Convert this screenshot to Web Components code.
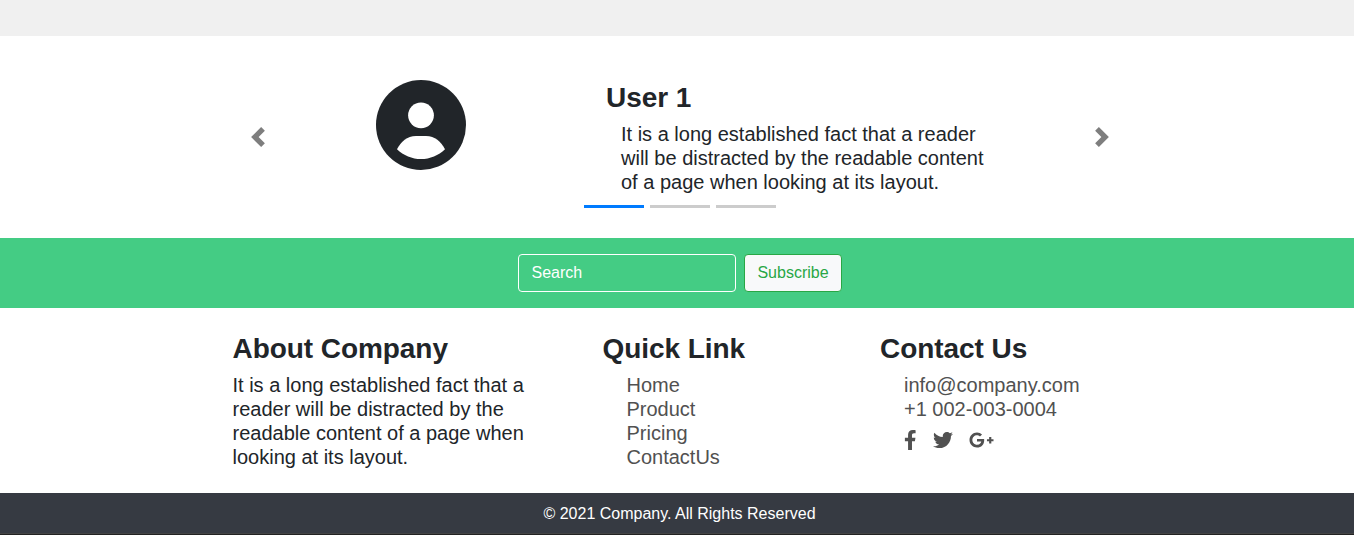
<!DOCTYPE html>
<html lang="en">
<head>
<meta charset="utf-8">
<title>Company</title>
<style>
body{margin:0;background:#fff;color:#212529;font:16px/1.5 "Liberation Sans",Arial,sans-serif;overflow:hidden}
</style>
</head>
<body>
<company-page></company-page>
<script>
const define = (name, html) => customElements.define(name, class extends HTMLElement {
  constructor() {
    super();
    const t = document.createElement('template');
    t.innerHTML = html;
    this.attachShadow({mode: 'open'}).append(t.content.cloneNode(true));
  }
});

define('user-avatar', `<style>:host{display:block;width:90px;height:90px}svg{display:block}</style>
<svg width="90" height="90" viewBox="0 0 90 90"><circle cx="45" cy="45" r="45" fill="#212529"/><circle cx="45" cy="35.3" r="12.9" fill="#fff"/><path d="M21 69.2C25 61.500 31 56 40 56H50C59 56 65 61.500 69 69.2C62.500 75.500 54 79 45 79S27.500 75.500 21 69.200Z" fill="#fff"/></svg>`);

define('testimonial-carousel', `<style>
:host{display:flex;height:202px;box-sizing:border-box;padding:44px 0 0 248px}
.arrow{width:20px;height:20px;margin-top:47px;fill:#000;opacity:.5}
user-avatar{margin-left:108px}
.body{margin-left:118px;width:408px}
.copy{padding-left:22px}
h3{margin:1px 0 7px;font-size:28px;line-height:33.6px;letter-spacing:-.06px}
p{margin:0 0 0 15px;width:370px;font-size:20px;line-height:24px}
.dots{display:flex;gap:6px;margin-top:11px}
.dots i{width:60px;height:3px;background:#ccc}
.dots i:first-child{background:#007bff}
.next{margin-left:100px}
</style>
<svg class="arrow" viewBox="0 0 8 8"><path d="M5.250 0l-4 4 4 4 1.500-1.500L4.250 4l2.500-2.500L5.250 0z"/></svg>
<user-avatar></user-avatar>
<div class="body"><div class="copy"><h3><slot name="name"></slot></h3><p><slot></slot></p></div><div class="dots"><i></i><i></i><i></i></div></div>
<svg class="arrow next" viewBox="0 0 8 8"><path d="M2.750 0l-1.500 1.500L3.750 4l-2.500 2.500L2.750 8l4-4-4-4z"/></svg>`);

define('subscribe-bar', `<style>
:host{display:flex;gap:8px;height:70px;box-sizing:border-box;padding:16px 0 0 518px;background:#44cc84}
input,button{box-sizing:border-box;height:38px;margin:0;border:1px solid #fff;border-radius:4px;padding:6px 12px;font:inherit}
input{width:218px;background:transparent;color:#fff;padding-left:12.5px}
input::placeholder{color:#fff;opacity:1}
button{width:98px;background:#f8f9fa;border-color:#28a745;color:#28a745;padding:6px 0}
</style><input type="text" placeholder="Search"><button>Subscribe</button>`);

define('footer-column', `<style>
:host{display:block;box-sizing:border-box;padding:0 15px}
h3{margin:0 0 7px;font-size:28px;line-height:33.6px;letter-spacing:-.06px}
.text{font-size:20px;line-height:24px}
:host([links]) .text{padding-left:24px;color:#515151}
</style><h3><slot name="title"></slot></h3><div class="text"><slot></slot></div>`);

define('nav-link', `<style>:host{display:block}</style><slot></slot>`);

define('social-links', `<style>:host{display:flex;gap:16px;padding-top:9.400px}svg{display:block;height:20px;fill:#515151}</style>
<svg width="12.5" viewBox="0 0 320 512"><path d="M279.14 288l14.22-92.66h-88.91v-60.13c0-25.35 12.42-50.06 52.24-50.06h40.42V6.26S260.43 0 225.36 0c-73.22 0-121.08 44.38-121.08 124.72v70.62H22.89V288h81.39v224h100.17V288z"/></svg>
<svg width="20" viewBox="0 0 512 512"><path d="M459.37 151.716c.325 4.548.325 9.097.325 13.645 0 138.72-105.583 298.558-298.558 298.558-59.452 0-114.68-17.219-161.137-47.106 8.447.974 16.568 1.299 25.34 1.299 49.055 0 94.213-16.568 130.274-44.832-46.132-.975-84.792-31.188-98.112-72.772 6.498.974 12.995 1.624 19.818 1.624 9.421 0 18.843-1.3 27.614-3.573-48.081-9.747-84.143-51.98-84.143-102.985v-1.299c13.969 7.797 30.214 12.67 47.431 13.319-28.264-18.843-46.781-51.005-46.781-87.391 0-19.492 5.197-37.36 14.294-52.954 51.655 63.675 129.3 105.258 216.365 109.807-1.624-7.797-2.599-15.918-2.599-24.04 0-57.828 46.782-104.934 104.934-104.934 30.213 0 57.502 12.67 76.67 33.137 23.715-4.548 46.456-13.32 66.599-25.34-7.798 24.366-24.366 44.833-46.132 57.827 21.117-2.273 41.584-8.122 60.426-16.243-14.292 20.791-32.161 39.308-52.628 54.253z"/></svg>
<svg width="25" viewBox="0 0 640 512"><path d="M386.061 228.496c1.834 9.692 3.143 19.384 3.143 31.956C389.204 370.205 315.599 448 204.8 448c-106.084 0-192-85.915-192-192s85.916-192 192-192c51.864 0 95.083 18.859 128.611 50.292l-52.126 50.03c-14.145-13.621-39.028-29.599-76.485-29.599-65.484 0-118.92 54.221-118.92 121.277 0 67.056 53.436 121.277 118.92 121.277 75.961 0 104.513-54.745 108.965-82.773H204.8v-66.009h181.261zm185.406 6.437V179.2h-56.001v55.733h-55.733v56.001h55.733v55.733h56.001v-55.733H627.2v-56.001h-55.733z"/></svg>`);

define('copyright-bar', `<style>:host{display:block;height:42px;box-sizing:border-box;padding:9px 0 0 5px;background:#363a42;border-bottom:1px solid #222;box-shadow:inset 0 -1px #444;color:#fff;text-align:center}</style><slot></slot>`);

define('company-page', `<style>
:host{display:block}
.top{height:36px;background:#f0f0f0}
.cols{display:grid;grid-template-columns:370px 277.5px 277.5px;height:185px;box-sizing:border-box;padding:24px 0 0 217.5px}
</style>
<div class="top"></div>
<testimonial-carousel><span slot="name">User 1</span>It is a long established fact that a reader will be distracted by the readable content of a page when looking at its layout.</testimonial-carousel>
<subscribe-bar></subscribe-bar>
<div class="cols">
<footer-column><span slot="title">About Company</span>It is a long established fact that a reader will be distracted by the readable content of a page when looking at its layout.</footer-column>
<footer-column links><span slot="title">Quick Link</span><nav-link>Home</nav-link><nav-link>Product</nav-link><nav-link>Pricing</nav-link><nav-link>ContactUs</nav-link></footer-column>
<footer-column links><span slot="title">Contact Us</span><nav-link>info@company.com</nav-link><nav-link>+1 002-003-0004</nav-link><social-links></social-links></footer-column>
</div>
<copyright-bar>© 2021 Company. All Rights Reserved</copyright-bar>`);
</script>
</body>
</html>
